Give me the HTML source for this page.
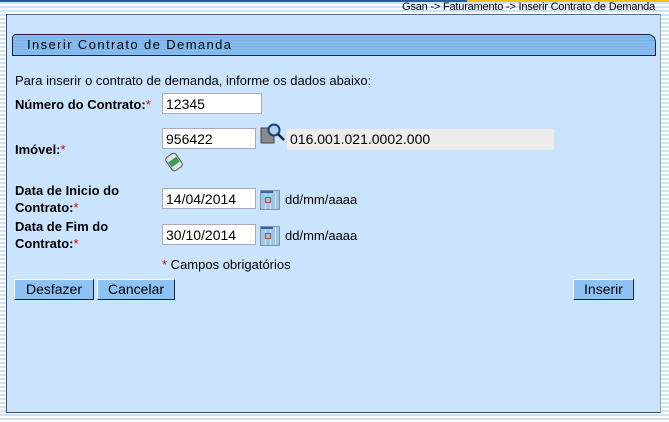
<!DOCTYPE html>
<html><head><meta charset="utf-8"><style>
body{margin:0;width:669px;height:422px;overflow:hidden;font-family:"Liberation Sans",Arial,sans-serif;font-size:13px;color:#000;
background:repeating-linear-gradient(#fff 0,#fff 2px,#cde3f7 2px,#cde3f7 4px);position:relative}
.top{position:absolute;left:0;top:0;width:669px;height:2px;background:#2a5d9a}
.top2{position:absolute;left:467px;top:0;width:202px;height:2px;background:#f3c20b}
.bc{position:absolute;right:14px;top:2px;font-size:11px;line-height:11px;padding-left:3px;letter-spacing:-0.2px}
.panel{position:absolute;left:6px;top:14px;width:653px;height:397px;background:#cbe4fd;border:1px solid #34506e;border-right-color:#8aa;border-top-color:#55708c}
.title{position:absolute;left:12px;top:34px;height:20px;border:1px solid #223;border-radius:4px 8px 0 0;
background:repeating-linear-gradient(#86bdf0 0,#86bdf0 2px,#7bb2e8 2px,#7bb2e8 3px);font-size:13px;letter-spacing:1.4px;line-height:20px;padding-left:14px;width:628px}
.t{position:absolute;white-space:nowrap}
b{font-weight:bold}
.r{color:#d00}
.in{position:absolute;height:21px;background:#fff;border:1px solid #aab;box-sizing:border-box;font-size:14px;line-height:20px;padding-left:3px}
.btn{position:absolute;top:279px;height:21px;background:#8fc3f5;border:1px solid;border-color:#fff #223 #223 #fff;box-sizing:border-box;font-size:14px;line-height:19px;text-align:center}
.cal{position:absolute;width:20px;height:20px;background:repeating-linear-gradient(90deg,#9cc8e6 0,#9cc8e6 4px,#cfe6f5 4px,#cfe6f5 5px);border:1px solid #7895ac;box-sizing:border-box}
.cal:before{content:"";position:absolute;left:0;top:0;width:12px;height:2px;background:#3b5fa8}
.cal:after{content:"";position:absolute;left:4px;top:6px;width:4px;height:4px;border:1px solid #b44}
</style></head><body>
<div class="top"></div><div class="top2"></div>
<div class="bc">Gsan -&gt; Faturamento -&gt; Inserir Contrato de Demanda</div>
<div class="panel"></div>
<div class="title">Inserir Contrato de Demanda</div>
<div class="t" style="left:15px;top:73px">Para inserir o contrato de demanda, informe os dados abaixo:</div>
<div class="t" style="left:15px;top:97px"><b>Número do Contrato:</b><span class="r">*</span></div>
<div class="in" style="left:162px;top:93px;width:100px">12345</div>
<div class="t" style="left:15px;top:142px"><b>Imóvel:</b><span class="r">*</span></div>
<div class="in" style="left:162px;top:128px;width:94px">956422</div>
<svg style="position:absolute;left:260px;top:122px" width="26" height="24"><rect x="1" y="6" width="13" height="15" fill="#8a8a8a" stroke="#444"/><circle cx="14" cy="8" r="5.5" fill="#a8d4f0" stroke="#1a3c78" stroke-width="2"/><line x1="18" y1="12" x2="24" y2="18" stroke="#222" stroke-width="2.5"/></svg>
<div class="t" style="left:287px;top:129px;width:264px;height:21px;background:#ececec;font-size:14px;line-height:21px;padding-left:3px">016.001.021.0002.000</div>
<svg style="position:absolute;left:164px;top:152px" width="20" height="20"><g transform="rotate(-35 10 10)"><rect x="4" y="2" width="12" height="16" rx="3" fill="#dfe8e0" stroke="#555"/><rect x="5" y="7" width="10" height="6" fill="#3f9a5a"/></g></svg>
<div class="t" style="left:15px;top:182px;line-height:17px"><b>Data de Inicio do<br>Contrato:</b><span class="r">*</span></div>
<div class="in" style="left:162px;top:188px;width:94px">14/04/2014</div>
<div class="cal" style="left:260px;top:190px"></div>
<div class="t" style="left:285px;top:192px">dd/mm/aaaa</div>
<div class="t" style="left:15px;top:218px;line-height:17px"><b>Data de Fim do<br>Contrato:</b><span class="r">*</span></div>
<div class="in" style="left:162px;top:224px;width:94px">30/10/2014</div>
<div class="cal" style="left:260px;top:226px"></div>
<div class="t" style="left:285px;top:228px">dd/mm/aaaa</div>
<div class="t" style="left:162px;top:257px"><span class="r">*</span> Campos obrigatórios</div>
<div class="btn" style="left:14px;width:80px">Desfazer</div>
<div class="btn" style="left:97px;width:78px">Cancelar</div>
<div class="btn" style="left:573px;width:61px">Inserir</div>
</body></html>
